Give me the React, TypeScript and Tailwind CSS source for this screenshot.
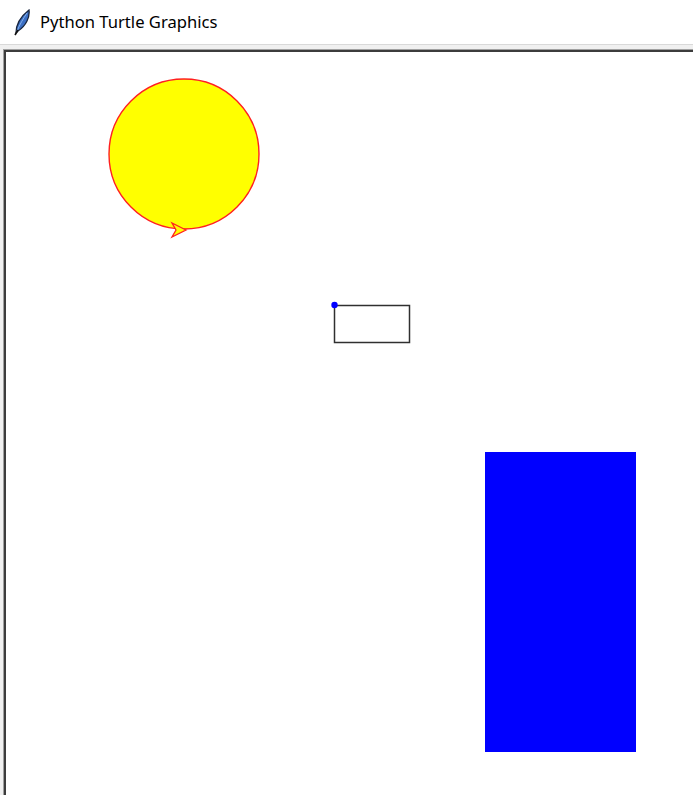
import React from 'react';

const Feather = () => (
    <svg width="18" height="27" viewBox="0 0 18 27" className="shrink-0">
        <path d="M3 24 C3 16 7 8 16 1 C17 8 13 17 5 22 Z" fill="#3b6fc4" stroke="#18253d" strokeWidth="1.3" />
        <path d="M14 4 C10 10 7 15 4 22" stroke="#8fb8ee" strokeWidth="0.9" fill="none" />
        <path d="M5 21 L2 26" stroke="#111" strokeWidth="1.6" />
    </svg>
);

const TurtleCanvas = () => (
    <svg width="687" height="743" viewBox="6 52 687 743" className="block">
        {/* sun */}
        <circle cx="184" cy="154" r="75" fill="#ffff00" stroke="#ff2020" strokeWidth="1.4" />
        {/* turtle cursor */}
        <polygon points="186,230 172,223 176,230 172,237" fill="#ffff00" stroke="#ff2020" strokeWidth="1.3" strokeLinejoin="miter" />
        {/* small outline box */}
        <rect x="334.5" y="305.5" width="75" height="37" fill="none" stroke="#303030" strokeWidth="1.5" />
        <circle cx="334.5" cy="305" r="3.2" fill="#0000ff" />
        {/* blue block */}
        <rect x="485" y="452" width="151" height="300" fill="#0000ff" />
    </svg>
);

export default function App() {
    return (
        <div className="w-[693px] h-[795px] overflow-hidden bg-white flex flex-col" style={{ fontFamily: '"Noto Sans", "Open Sans", sans-serif' }}>
            <div className="h-[44px] shrink-0 flex items-center pl-[13px] gap-[9px] bg-white">
                <Feather />
                <span className="text-[16.6px] text-black mt-[1px]">Python Turtle Graphics</span>
            </div>
            <div className="flex-1 bg-[#f0f0f0] border-t border-[#d9d9d9] pt-[4px] pl-[3px] flex flex-col">
                <div className="flex-1 border-t border-l border-[#a0a0a0]">
                    <div className="h-full border-t-2 border-l-2 border-[#3c3c3c] bg-white overflow-hidden">
                        <TurtleCanvas />
                    </div>
                </div>
            </div>
        </div>
    );
}
